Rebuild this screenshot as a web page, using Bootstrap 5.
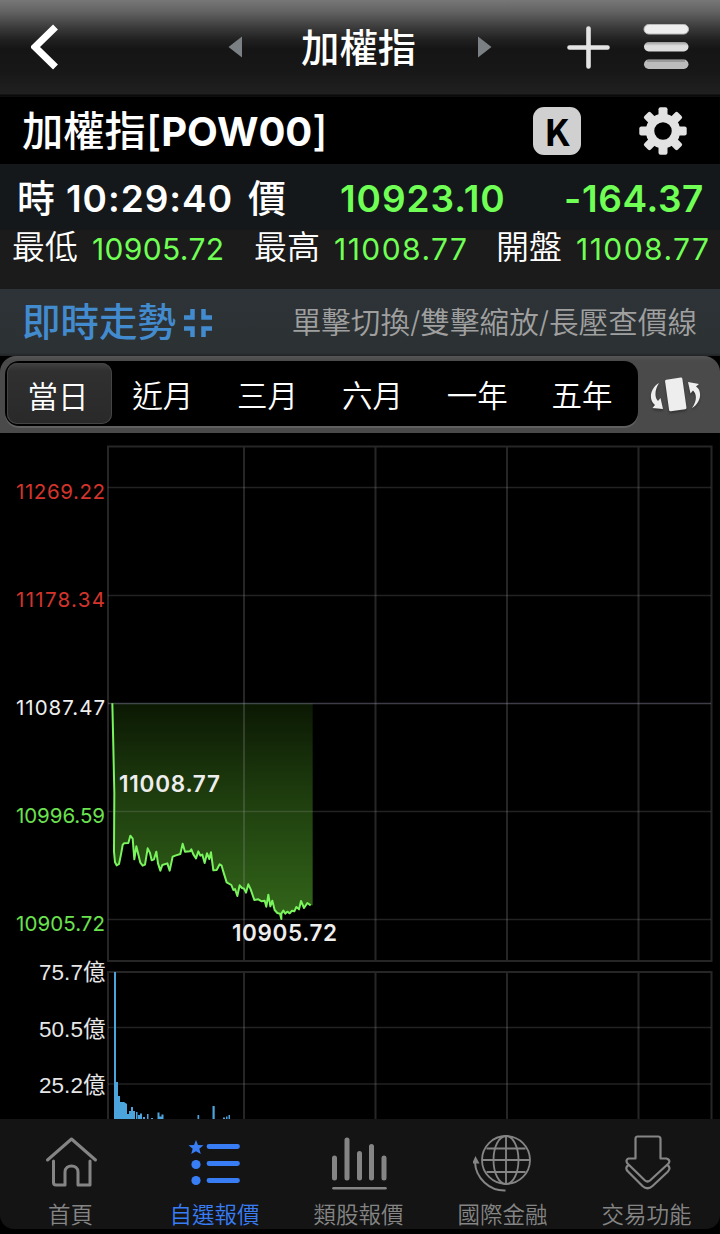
<!DOCTYPE html>
<html lang="zh-Hant">
<head>
<meta charset="utf-8">
<meta name="viewport" content="width=device-width, initial-scale=1">
<title>加權指</title>
<link href="https://cdn.jsdelivr.net/npm/bootstrap@5.3.0/dist/css/bootstrap.min.css" rel="stylesheet">
<script src="https://cdn.jsdelivr.net/npm/bootstrap@5.3.0/dist/js/bootstrap.bundle.min.js"></script>
<style>
body{background:#000;color:#fff;font-family:Inter,"Noto Sans CJK TC",sans-serif;line-height:1;height:1234px;overflow:hidden}
svg{display:block;flex:none}
.app{width:720px;height:1234px}
.topbar{height:97px;padding:0 31px;background:linear-gradient(#777 0,#626262 12px,#3c3c3c 27px,#202020 40px,#151515 49px,#171717 70px,#202020 94px,#080808 95px,#101010 97px)}
.topbar .ttl{font-size:38.4px;font-weight:500;line-height:96px;width:115px;margin-left:59px;white-space:nowrap}
.symbol{height:67px;padding-left:22px}
.symbol h1{font-size:41.3px;font-weight:500;line-height:67px;width:511px;white-space:nowrap;padding-top:1px}
.symbol h1 b{font-size:40px;font-weight:700}
.kbtn{width:48px;height:48px;border-radius:11px;background:#d0d0d0;color:#000;font:700 37px/47px "Noto Sans CJK TC",sans-serif}
.quote{height:66px;background:#14181b;display:grid;grid-template-columns:49px 182px 92px 223px 1fr;padding:2px 16px 0 17px;line-height:66px;font-size:38px;white-space:nowrap}
.quote span{font-weight:500;line-height:65px}
.quote b{font-weight:600;font-size:37px;letter-spacing:.95px}
.quote b:last-child{text-align:right;letter-spacing:.6px}
.range{height:59px;background:#1b1b1b;display:grid;grid-template-columns:80px 162px 80px 162px 80px 1fr;padding-left:12px;line-height:34px;font-size:33px;white-space:nowrap}
.range span{font-weight:350}
.range b{font-weight:400;font-size:30px;line-height:38px;letter-spacing:.35px}
.range .hi{letter-spacing:1.45px}
.up-g{color:#70ff55}
.trend{height:67px;background:linear-gradient(#2d3337,#2c3133 95%,#202426);padding:0 23px 0 22px}
.trend h2{font-size:38.5px;font-weight:500;color:#438bcf;line-height:69px}
.trend p{font-size:29.6px;font-weight:350;color:#a0a0a0;line-height:69px}
.periods{height:77px;background:linear-gradient(#555,#4a4a4a 5px,#4a4a4a);border-radius:16px 16px 0 0;padding:5px 0 7px 5px}
.periods .nav{width:633px;height:65px;background:#000;border-radius:14px;padding:2px;border-bottom:0;box-shadow:0 2px 0 #606060}
.periods .nav-link{width:105px;height:61px;padding:0 3px 0 0;color:#fff;font-size:30.5px;font-weight:350;line-height:65px;text-align:center;border-radius:10px}
.periods .nav-link.active{background:linear-gradient(#414141,#303030 8px,#292929);color:#fff;box-shadow:inset 0 0 0 1px #444;line-height:68px}
.tabbar{height:110px;background:#141414;border-radius:0 0 14px 14px;color:#858585}
.tabbar a{width:144px;color:inherit;text-decoration:none;font-size:22.5px;font-weight:350;line-height:28px;padding:10px 3px 0 0}
.tabbar a.active{color:#397df5}
.tabbar svg{margin-bottom:8px}
svg text{font-family:Inter,"Noto Sans CJK TC",sans-serif}
svg .vol{font-family:"Liberation Sans","Noto Sans CJK TC",sans-serif}
</style>
</head>
<body>
<main class="app d-flex flex-column">
<header class="topbar d-flex align-items-start">
<svg width="28" height="94" viewBox="31 0 28 94" fill="none" stroke="#fff" stroke-width="7"><path d="M55.500 27L35 47L55.500 67"/></svg>
<svg width="14" height="94" viewBox="228 0 14 94" style="margin-left:169px"><path d="M228.500 47L242 36.500V57.500Z" fill="#7b8084"/></svg>
<div class="ttl">加權指</div>
<svg width="14" height="94" viewBox="478 0 14 94" style="margin-left:62px"><path d="M491.500 47L478 36.500V57.500Z" fill="#7b8084"/></svg>
<svg width="44" height="94" viewBox="566 0 44 94" style="margin-left:74px" stroke="#e4e4e4" stroke-width="4.600" stroke-linecap="round"><path d="M569.500 47.500H607.500M588.500 28.500V66.500"/></svg>
<svg width="46" height="94" viewBox="643 0 46 94" style="margin-left:33px">
<defs><linearGradient id="mb" x2="0" y2="1"><stop offset="0" stop-color="#999"/><stop offset=".4" stop-color="#ddd"/><stop offset="1" stop-color="#ddd"/></linearGradient></defs>
<rect x="644" y="24.500" width="44.500" height="9.500" rx="4.700" fill="#eee" stroke="#bbb"/><rect x="644" y="42" width="44.500" height="9.500" rx="4.700" fill="url(#mb)"/><rect x="644" y="59.500" width="44.500" height="9.500" rx="4.700" fill="#bcbcbc"/><path d="M647 61H685" stroke="#999" stroke-width="2"/></svg>
</header>
<section class="symbol d-flex align-items-center">
<h1 class="m-0">加權指[<b>POW00</b>]</h1>
<div class="kbtn text-center">K</div>
<svg width="50" height="50" viewBox="-25 -25 50 50" style="margin-left:57px">
<circle r="13" fill="none" stroke="#e2e2e2" stroke-width="8.500"/>
<g fill="#e2e2e2"><rect id="t" x="-4.500" y="-23.700" width="9" height="10" rx="2"/><use href="#t" transform="rotate(45)"/><use href="#t" transform="rotate(90)"/><use href="#t" transform="rotate(135)"/><use href="#t" transform="rotate(180)"/><use href="#t" transform="rotate(225)"/><use href="#t" transform="rotate(270)"/><use href="#t" transform="rotate(315)"/></g></svg>
</section>
<section class="quote"><span>時</span><b>10:29:40</b><span>價</span><b class="up-g">10923.10</b><b class="up-g">-164.37</b></section>
<section class="range"><span>最低</span><b class="up-g">10905.72</b><span>最高</span><b class="up-g hi">11008.77</b><span>開盤</span><b class="up-g hi">11008.77</b></section>
<section class="trend d-flex align-items-center">
<h2 class="m-0">即時走勢</h2>
<svg class="ms-2" width="28" height="28" viewBox="0 0 28 28" fill="none" stroke="#438bcf" stroke-width="4.500"><path d="M8.500 0V8.500H0M19.500 0V8.500H28M0 19.500H8.500V28M28 19.500H19.500V28"/></svg>
<p class="m-0 ms-auto">單擊切換/雙擊縮放/長壓查價線</p>
</section>
<section class="periods d-flex">
<nav class="nav flex-nowrap"><a class="nav-link active">當日</a><a class="nav-link">近月</a><a class="nav-link">三月</a><a class="nav-link">六月</a><a class="nav-link">一年</a><a class="nav-link">五年</a></nav>
<svg width="60" height="65" viewBox="645 361 60 65" style="margin-left:7px;filter:drop-shadow(0 2px 1px #333)" fill="#eee"><rect x="667" y="378.500" width="17.500" height="32" rx="1.500" transform="rotate(-8 675.500 394.500)"/><path d="M659 383C649 389 649 401 655 405L652.500 408L663 409L660.500 398L658 401C654 397 655 389 659 383ZM692 408C702 402 702 390 696 386.500L699 384L688 382L690.500 393.500L693 390.500C697 394 697 401 692 408Z"/></svg>
</section>
<svg width="720" height="686" viewBox="0 433 720 686">
<defs><linearGradient id="area" gradientUnits="userSpaceOnUse" x1="0" y1="40" x2="0" y2="660"><stop offset="0" stop-color="#0b1803"/><stop offset=".45" stop-color="#1e3d0e"/><stop offset="1" stop-color="#316319"/></linearGradient></defs>
<g transform="translate(90 690) scale(.33333)">
<path d="M67 40L70 170L73 310L72 485L75 517L80 526L87 522L93 493L98 465L102 460L115 459L121 437L128 446L133 508L139 469L151 518L158 527L165 524L173 475L180 489L185 511L192 508L199 485L204 520L211 542L217 525L232 520L239 542L248 500L258 496L271 492L278 461L285 485L300 484L304 478L310 493L318 505L325 484L331 497L337 494L344 519L351 490L358 507L363 487L370 541L380 540L389 523L395 527L400 545L410 577L424 585L430 600L435 597L442 618L449 586L456 594L462 596L468 608L475 583L482 598L493 630L505 628L515 634L524 632L529 650L535 614L541 649L547 632L554 660L562 669L570 671L574 687V671L580 662L586 671L592 665L599 670L606 662L613 664L619 651L627 658L633 633L642 654L652 639L662 646H668V40Z" fill="url(#area)"/>
</g>
<g stroke="#aaa" stroke-opacity=".2" stroke-width="1.500" fill="none"><path d="M108 487.500H711M108 595.500H711M108 811.500H711M108 919.500H711M108 1027.500H711M108 1084H711"/><path stroke="#a7aacb" stroke-opacity=".36" d="M108 703.500H711"/></g>
<path d="M108 446.500H711.500V961H108ZM244 446.500V961M375.500 446.500V961M507 446.500V961M638.500 446.500V961M108 1119V972H711.500V1119M244 972V1119M375.500 972V1119M507 972V1119M638.500 972V1119" fill="none" stroke="#999" stroke-opacity=".25" stroke-width="2"/>
<g transform="translate(90 690) scale(.33333)">
<path d="M67 40L70 170L73 310L72 485L75 517L80 526L87 522L93 493L98 465L102 460L115 459L121 437L128 446L133 508L139 469L151 518L158 527L165 524L173 475L180 489L185 511L192 508L199 485L204 520L211 542L217 525L232 520L239 542L248 500L258 496L271 492L278 461L285 485L300 484L304 478L310 493L318 505L325 484L331 497L337 494L344 519L351 490L358 507L363 487L370 541L380 540L389 523L395 527L400 545L410 577L424 585L430 600L435 597L442 618L449 586L456 594L462 596L468 608L475 583L482 598L493 630L505 628L515 634L524 632L529 650L535 614L541 649L547 632L554 660L562 669L570 671L574 687V671L580 662L586 671L592 665L599 670L606 662L613 664L619 651L627 658L633 633L642 654L652 639L662 646" fill="none" stroke="#79f45d" stroke-width="6" stroke-linejoin="round"/>
</g>
<g font-size="20.500" text-anchor="end"><g fill="#d2342c"><text x="105" y="498.500" textLength="89">11269.22</text><text x="105" y="606.500" textLength="89">11178.34</text></g><text x="105" y="714.500" fill="#eee" textLength="89">11087.47</text><g fill="#6be24f"><text x="105" y="823" textLength="89">10996.59</text><text x="105" y="931" textLength="89">10905.72</text></g></g>
<g fill="#eee" font-size="22.500" font-weight="600"><text x="119" y="791.500" textLength="101">11008.77</text><text x="232" y="941" textLength="105">10905.72</text></g>
<g class="vol" fill="#e6e6e6" font-size="22.500" text-anchor="end"><text class="vol" x="105.500" y="980" textLength="66.500">75.7億</text><text class="vol" x="105.500" y="1036.500" textLength="66.500">50.5億</text><text class="vol" x="105.500" y="1092.500" textLength="66.500">25.2億</text></g>
<path fill="#4ca4dc" d="M114 972h2v110h2v14h2v6h4l3 2v10h2v-3h2v-4h2v4h2v8h-21ZM136 1112h1.500v7h-1.500ZM138 1115h2v4h-2ZM140 1113.500h2v5.500h-2ZM143 1117h2v2h-2ZM147 1114h1.500v5h-1.500ZM151 1118h2v1h-2ZM157.500 1112.500h2v4h2v-2h2v4.500h-6ZM197.500 1115h1.700v4h-1.700ZM212.500 1106h2.200v13h-2.200ZM223 1117.500h2v1.500h-2ZM226 1116.500h1.500v2.500h-1.500ZM228.500 1115h1.500v4h-1.500Z"/>
</svg>
<nav class="tabbar d-flex">
<a class="d-flex flex-column align-items-center"><svg width="60" height="64" viewBox="41 1129 60 64" fill="none" stroke="currentColor" stroke-width="3" stroke-linecap="round" stroke-linejoin="round"><path d="M47.500 1160L71.500 1139L95.500 1160M53.500 1161V1182.500Q53.500 1185 56 1185H65V1172C65 1164 78 1164 78 1172V1185H90V1161"/></svg>首頁</a>
<a class="active d-flex flex-column align-items-center"><svg width="60" height="64" viewBox="185 1129 60 64" fill="currentColor"><path d="M196 1140L198 1145L203.500 1145.300L199.300 1148.800L200.800 1154L196 1151.200L191.200 1154L192.700 1148.800L188.500 1145.300L194 1145Z"/><circle cx="196" cy="1164.500" r="4.600"/><circle cx="196" cy="1180.500" r="4.600"/><path d="M209 1146.500H237.500M209 1163.500H237.500M209 1180.500H237.500" stroke="currentColor" stroke-width="4.800" stroke-linecap="round"/></svg>自選報價</a>
<a class="d-flex flex-column align-items-center"><svg width="60" height="64" viewBox="329 1129 60 64" fill="none" stroke="currentColor" stroke-linecap="round"><path stroke-width="5" d="M334.500 1158V1178M347 1140V1178M359.500 1153.500V1178M371.500 1146.500V1178M384 1158V1178"/><path stroke-width="2.500" d="M333.500 1188.300H385.500"/></svg>類股報價</a>
<a class="d-flex flex-column align-items-center"><svg width="60" height="64" viewBox="472.500 1129 60 64" fill="none" stroke="currentColor" stroke-width="1.800"><circle cx="505.500" cy="1160" r="24"/><ellipse cx="505.500" cy="1160" rx="12.500" ry="24"/><path d="M505.500 1136V1184M481.500 1160H529.500M486 1148.500H525M486 1172H525"/><path d="M474.500 1162C475 1178 489 1191 505 1190.500" stroke-width="2"/><path d="M475 1158L473 1162.500H477.500Z" fill="currentColor"/></svg>國際金融</a>
<a class="d-flex flex-column align-items-center"><svg width="60" height="64" viewBox="616.500 1129 60 64" fill="none" stroke="currentColor" stroke-width="2.200" stroke-linejoin="round"><path d="M637 1136.500H657.500Q660 1136.500 660 1139V1158.500H666Q670.500 1160 668 1163.500L649.500 1180.500Q647 1182.500 644.500 1180.500L627 1163.500Q624.500 1160 628 1158.500H635V1139Q635 1136.500 637 1136.500ZM628 1165Q623.500 1168 628 1172L642 1186Q647 1190.500 652 1186L667 1172Q671 1168 667 1165"/></svg>交易功能</a>
</nav>
</main>
</body>
</html>
